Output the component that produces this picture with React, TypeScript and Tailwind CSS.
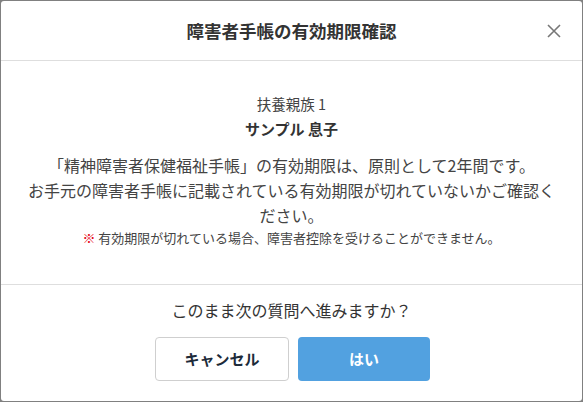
import React from "react";

export default function App() {
  return (
    <div
      className="w-[583px] h-[402px] bg-[#808080] p-px"
      style={{ fontFamily: '"Noto Sans CJK JP", "Noto Sans", sans-serif' }}
    >
      <div className="flex h-full flex-col rounded-[3px] bg-white text-[#333]">
        <div className="relative flex h-[60px] shrink-0 items-center justify-center border-b border-[#dedede]">
          <h1 className="text-[17.5px] font-bold leading-none text-[#333]">
            障害者手帳の有効期限確認
          </h1>
          <button className="absolute right-[19px] top-[21px] flex h-[18px] w-[18px] items-center justify-center text-[#777]">
            <svg width="14" height="14" viewBox="0 0 14 14" fill="none">
              <path d="M1 1L13 13M13 1L1 13" stroke="currentColor" strokeWidth="1.6" />
            </svg>
          </button>
        </div>

        <div className="flex h-[224px] shrink-0 flex-col items-center border-b border-[#dedede] px-4 pt-[32px] text-center">
          <p className="text-[14.5px] leading-[22px] text-[#444]">扶養親族 1</p>
          <p className="text-[15px] font-bold leading-[28px] text-[#333]">サンプル 息子</p>
          <p className="mt-[10px] whitespace-nowrap text-[16px] leading-[25px] text-[#444]">
            「精神障害者保健福祉手帳」の有効期限は、原則として2年間です。
            <br />
            お手元の障害者手帳に記載されている有効期限が切れていないかご確認く
            <br />
            ださい。
          </p>
          <p className="text-[13px] leading-[20px] text-[#444]">
            <span className="text-[#e60012]">※</span> 有効期限が切れている場合、障害者控除を受けることができません。
          </p>
        </div>

        <div className="flex flex-col items-center pt-[13px]">
          <p className="text-[16px] leading-[24px] text-[#333]">このまま次の質問へ進みますか？</p>
          <div className="mt-[15px] flex gap-[9px] pl-[2px]">
            <button className="h-[44px] w-[134px] rounded-[4px] border border-[#cfcfcf] bg-white text-[15px] font-bold text-[#1d2b3a]">
              キャンセル
            </button>
            <button className="h-[44px] w-[132px] rounded-[4px] bg-[#52a1e0] text-[15px] font-bold text-white">
              はい
            </button>
          </div>
        </div>
      </div>
    </div>
  );
}
